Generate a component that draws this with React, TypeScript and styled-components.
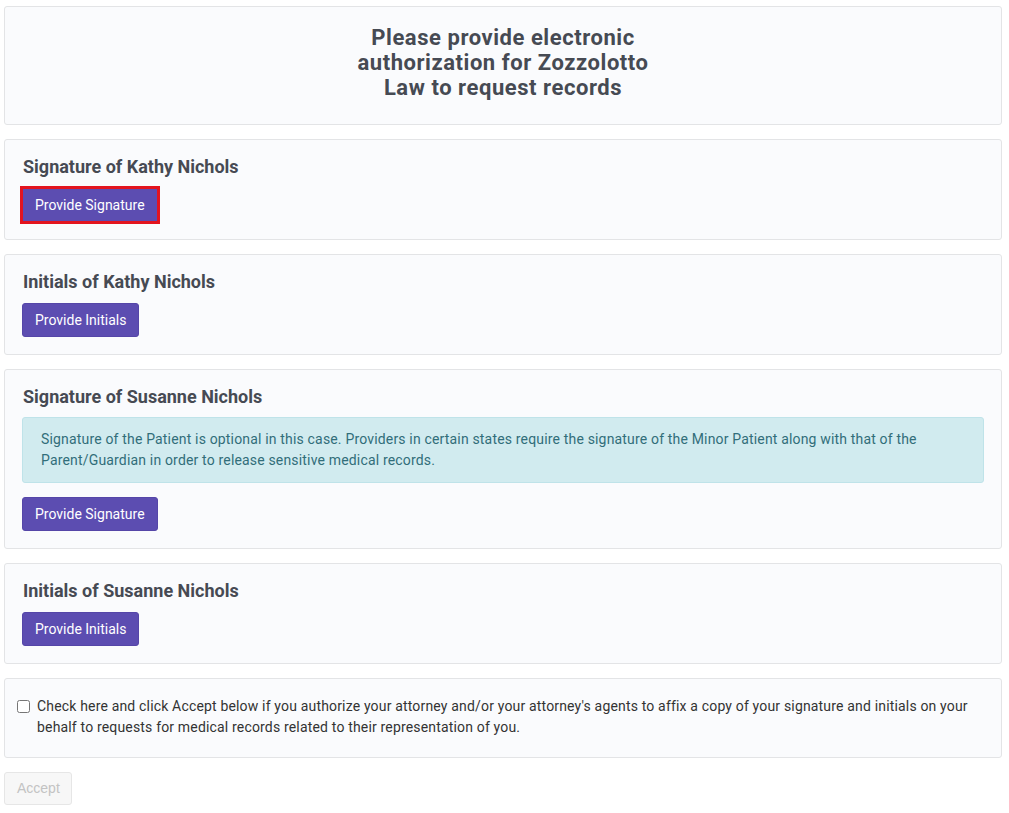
import React from "react";
import styled, { createGlobalStyle } from "styled-components";

const Global = createGlobalStyle`
  html, body { margin: 0; padding: 0; background: #ffffff; }
  body { font-family: Roboto, "Noto Sans", Arial, sans-serif; color: #333333; }
`;

const Page = styled.div`
  padding: 6px 7px 8px 4px;
  display: flex;
  flex-direction: column;
  gap: 14px;
`;

const Card = styled.section`
  background: #fafbfd;
  border: 1px solid #e3e4e6;
  border-radius: 3px;
  padding: 16px 17px 17px;
  display: flex;
  flex-direction: column;
  align-items: flex-start;
`;

const HeaderCard = styled(Card)`
  align-items: center;
  padding: 18px 18px 24px;
`;

const Title = styled.h1`
  margin: 0;
  max-width: 310px;
  text-align: center;
  font-size: 22px;
  line-height: 25px;
  font-weight: 700;
  letter-spacing: 0.55px;
  color: #464a53;
`;

const Heading = styled.h2`
  margin: 0 0 10px 1px;
  font-size: 18px;
  line-height: 22px;
  font-weight: 700;
  color: #464a53;
`;

const Button = styled.button<{ $focused?: boolean }>`
  font-family: Roboto, "Noto Sans", Arial, sans-serif;
  font-size: 14px;
  line-height: 20px;
  padding: 6px 12px;
  color: #ffffff;
  background: #5c4db1;
  border: 1px solid #5546a8;
  border-radius: 3px;
  cursor: pointer;
  outline: ${(p) => (p.$focused ? "3px solid #e3141f" : "none")};
  outline-offset: -1px;
  ${(p) => (p.$focused ? "border-radius: 0;" : "")}
`;

const Alert = styled.div`
  align-self: stretch;
  background: #d1ebef;
  border: 1px solid #bfe3e9;
  border-radius: 3px;
  padding: 11px 18px;
  margin: -1px 0 14px;
  font-size: 14px;
  line-height: 21px;
  letter-spacing: 0.17px;
  color: #316e7a;
`;

const ConsentCard = styled(Card)`
  flex-direction: row;
  align-items: flex-start;
  padding: 17px 18px 19px 12px;
  gap: 7px;
`;

const Check = styled.input`
  margin: 4px 0 0;
  width: 13px;
  height: 13px;
  flex: none;
`;

const ConsentText = styled.label`
  font-size: 14px;
  line-height: 21px;
  letter-spacing: 0.17px;
  color: #333333;
`;

const AcceptRow = styled.div`
  display: flex;
`;

const AcceptButton = styled.button`
  font-family: "Liberation Sans", Arial, sans-serif;
  font-size: 14px;
  line-height: 19px;
  padding: 6px 11px 6px 12px;
  color: #c3c3c3;
  background: #f7f7f7;
  border: 1px solid #e6e6e6;
  border-radius: 3px;
`;

const sections: { title: string; label: string; alert?: string; focused?: boolean }[] = [
  { title: "Signature of Kathy Nichols", label: "Provide Signature", focused: true },
  { title: "Initials of Kathy Nichols", label: "Provide Initials" },
  {
    title: "Signature of Susanne Nichols",
    label: "Provide Signature",
    alert:
      "Signature of the Patient is optional in this case. Providers in certain states require the signature of the Minor Patient along with that of the Parent/Guardian in order to release sensitive medical records.",
  },
  { title: "Initials of Susanne Nichols", label: "Provide Initials" },
];

export default function App() {
  return (
    <>
      <Global />
      <Page>
        <HeaderCard>
          <Title>Please provide electronic authorization for Zozzolotto Law to request records</Title>
        </HeaderCard>
        {sections.map((s, i) => (
          <Card key={i}>
            <Heading>{s.title}</Heading>
            {s.alert && <Alert>{s.alert}</Alert>}
            <Button $focused={s.focused}>{s.label}</Button>
          </Card>
        ))}
        <ConsentCard>
          <Check type="checkbox" id="consent" />
          <ConsentText htmlFor="consent">
            Check here and click Accept below if you authorize your attorney and/or your attorney's agents to affix a
            copy of your signature and initials on your behalf to requests for medical records related to their
            representation of you.
          </ConsentText>
        </ConsentCard>
        <AcceptRow>
          <AcceptButton disabled>Accept</AcceptButton>
        </AcceptRow>
      </Page>
    </>
  );
}
